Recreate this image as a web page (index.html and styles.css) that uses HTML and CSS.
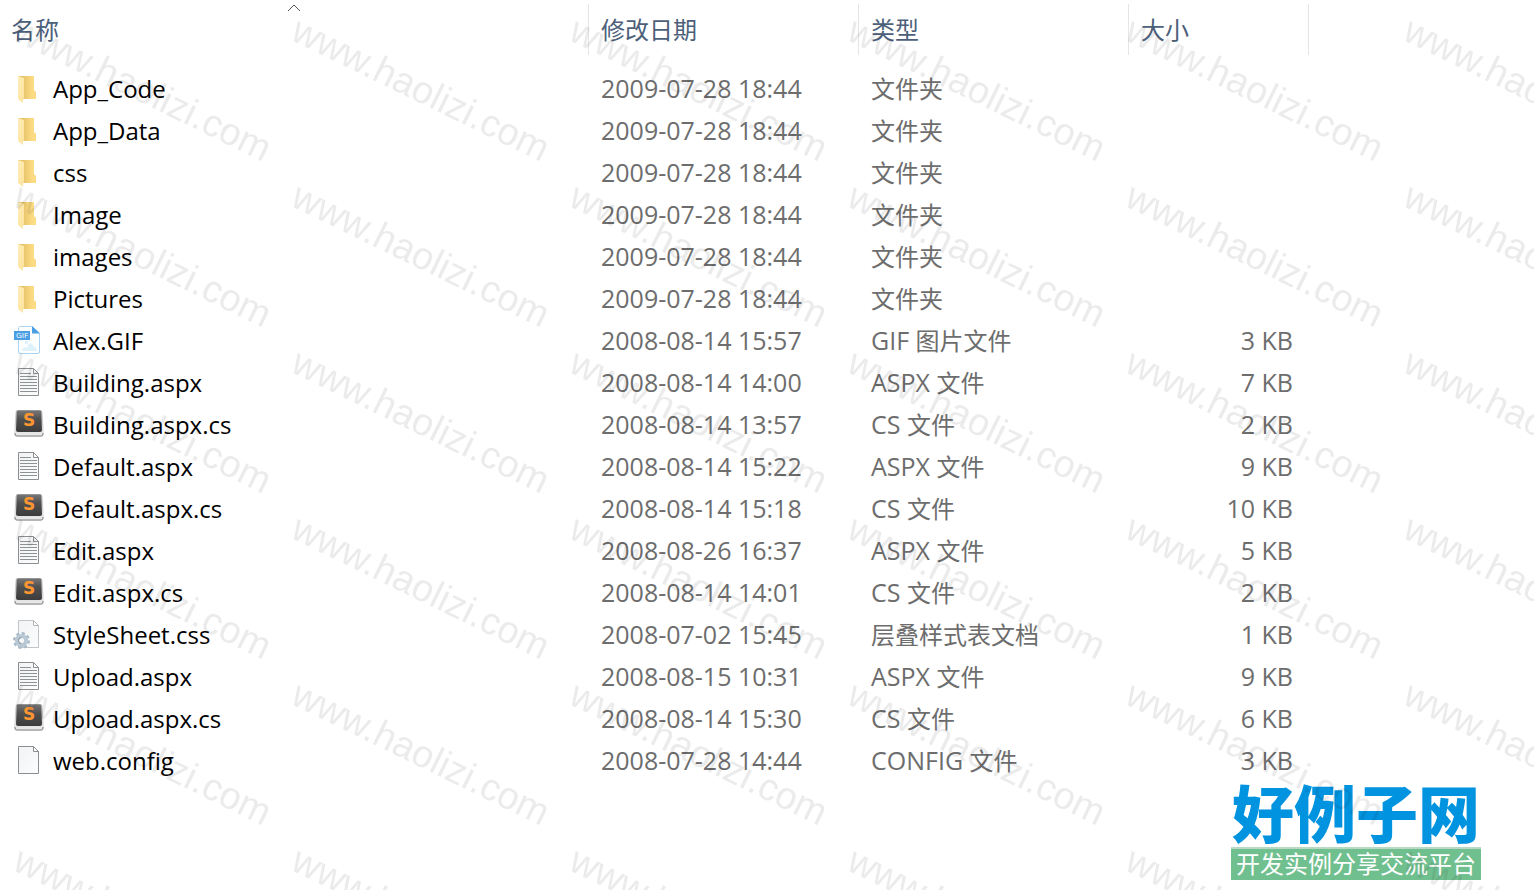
FILE: index.html
```
<!DOCTYPE html>
<html lang="zh-CN">
<head>
    <meta charset="UTF-8">
    <meta name="viewport" content="width=device-width, initial-scale=1.0">
    <title>文件列表</title>
    <link rel="stylesheet" href="styles.css">
</head>
<body>
    <!-- file type icons -->
    <svg class="sprite" aria-hidden="true">
        <defs>
            <linearGradient id="folderFront" x1="0" y1="0" x2="1" y2="0">
                <stop offset="0.3" stop-color="#e8c56c"/>
                <stop offset="0.8" stop-color="#fbdb83"/>
            </linearGradient>
            <linearGradient id="folderFlap" x1="0" y1="0" x2="1" y2="1">
                <stop offset="0" stop-color="#ffedb9"/>
                <stop offset="1" stop-color="#fde29a"/>
            </linearGradient>
            <linearGradient id="paper" x1="0" y1="0" x2="1" y2="1">
                <stop offset="0" stop-color="#f1f3f4"/>
                <stop offset="1" stop-color="#fcfdfd"/>
            </linearGradient>
            <linearGradient id="keyTop" x1="0" y1="0" x2="0" y2="1">
                <stop offset="0" stop-color="#777"/>
                <stop offset="0.4" stop-color="#505050"/>
                <stop offset="1" stop-color="#3c3c3c"/>
            </linearGradient>
            <linearGradient id="keySide" x1="0" y1="0" x2="0" y2="1">
                <stop offset="0" stop-color="#b0b0b0"/>
                <stop offset="1" stop-color="#eee"/>
            </linearGradient>
        </defs>
        <symbol id="folder" viewBox="0 0 32 32">
            <path d="M6 3h16v14l2 2v7H10L6 24z" fill="url(#folderFront)"/>
            <path d="M6 3l6 2v20l-1 1v4l-5-4z" fill="url(#folderFlap)"/>
        </symbol>
        <symbol id="gif" viewBox="0 0 32 32">
            <path d="M7.500 1.500H20L27.500 8v19a1.500 1.500 0 0 1-1.500 1.500H8A1.500 1.500 0 0 1 6.500 27V2.500z" fill="#fcfeff" stroke="#a9d3f1"/>
            <path d="M20 1l8 7.500h-8z" fill="#4a9fe4"/>
            <circle cx="14.500" cy="17.500" r="1.800" fill="#dff2fc"/>
            <path d="M10 26c0-3 3-5 5-3 2-6 5-6 7-1 2 0 3 2 3 4z" fill="#dff2fc"/>
            <path d="M2 6h16v9H2z" fill="#4a9fe4"/>
            <text x="10" y="13" class="gif-label">GIF</text>
        </symbol>
        <symbol id="page" viewBox="0 0 32 32">
            <path d="M6.500 1.500h15l5 5v22h-20z" fill="url(#paper)" stroke="#8b8f91"/>
            <path d="M21.500 1.500v5h5z" fill="#fff" stroke="#8b8f91"/>
        </symbol>
        <symbol id="text" viewBox="0 0 32 32">
            <use href="#page"/>
            <path d="M8 6.500h11M8 9.500h17M8 12.500h17M8 15.500h17M8 18.500h17M8 21.500h17M8 24.500h17" stroke="#8f9294" fill="none"/>
        </symbol>
        <symbol id="sublime" viewBox="0 0 32 32">
            <path d="M6 1h22q2 0 2.300 2L32 25q0 3-3 3H5q-3 0-3-3L3.700 3Q4 1 6 1z" fill="url(#keySide)"/>
            <path d="M3 24v1q0 2 2 2h24q2 0 2-2v-1" fill="none" stroke="#808080"/>
            <path d="M6 1.500h22q1 0 1.200 1.500L30 21q0 2-2 2H6q-2 0-2-2L4.800 3Q5 1.500 6 1.500z" fill="url(#keyTop)"/>
            <text x="17" y="17" class="sublime-label">S</text>
        </symbol>
        <symbol id="config" viewBox="0 0 32 32">
            <path d="M6.500 1.500h15l5 5v22h-20z" fill="url(#paper)" stroke="#c3c6c8"/>
            <path d="M21.500 1.500v5h5z" fill="#fff" stroke="#b3b6b8"/>
            <circle cx="9.500" cy="21.500" r="7" fill="none" stroke="#a9bac9" stroke-width="3" stroke-dasharray="3 2.500"/>
            <circle cx="9.500" cy="21.500" r="4.600" fill="#f6f8f9" stroke="#b9c8d5" stroke-width="4"/>
            <path d="M9.500 18.500a3 3 0 0 0 0 6" fill="none" stroke="#7f909e"/>
        </symbol>
    </svg>

    <main class="explorer">
        <table class="files">
            <colgroup>
                <col>
                <col class="col-date">
                <col class="col-type">
                <col class="col-size">
            </colgroup>
            <thead>
                <tr>
                    <th aria-sort="ascending">
                        <button type="button">名称</button>
                        <svg class="sort" width="14" height="8" viewBox="0 0 14 8" aria-hidden="true"><path d="M1 7l6-6 6 6" fill="none" stroke="#555"/></svg>
                    </th>
                    <th><button type="button">修改日期</button></th>
                    <th><button type="button">类型</button></th>
                    <th><button type="button">大小</button></th>
                </tr>
            </thead>
            <tbody>
                <tr><td><a href="#"><svg class="icon"><use href="#folder"/></svg>App_Code</a></td><td>2009-07-28 18:44</td><td class="type"><span>文件夹</span></td><td></td></tr>
                <tr><td><a href="#"><svg class="icon"><use href="#folder"/></svg>App_Data</a></td><td>2009-07-28 18:44</td><td class="type"><span>文件夹</span></td><td></td></tr>
                <tr><td><a href="#"><svg class="icon"><use href="#folder"/></svg>css</a></td><td>2009-07-28 18:44</td><td class="type"><span>文件夹</span></td><td></td></tr>
                <tr><td><a href="#"><svg class="icon"><use href="#folder"/></svg>Image</a></td><td>2009-07-28 18:44</td><td class="type"><span>文件夹</span></td><td></td></tr>
                <tr><td><a href="#"><svg class="icon"><use href="#folder"/></svg>images</a></td><td>2009-07-28 18:44</td><td class="type"><span>文件夹</span></td><td></td></tr>
                <tr><td><a href="#"><svg class="icon"><use href="#folder"/></svg>Pictures</a></td><td>2009-07-28 18:44</td><td class="type"><span>文件夹</span></td><td></td></tr>
                <tr><td><a href="#"><svg class="icon"><use href="#gif"/></svg>Alex.GIF</a></td><td>2008-08-14 15:57</td><td class="type">GIF <span>图片文件</span></td><td class="size">3 KB</td></tr>
                <tr><td><a href="#"><svg class="icon"><use href="#text"/></svg>Building.aspx</a></td><td>2008-08-14 14:00</td><td class="type">ASPX <span>文件</span></td><td class="size">7 KB</td></tr>
                <tr><td><a href="#"><svg class="icon"><use href="#sublime"/></svg>Building.aspx.cs</a></td><td>2008-08-14 13:57</td><td class="type">CS <span>文件</span></td><td class="size">2 KB</td></tr>
                <tr><td><a href="#"><svg class="icon"><use href="#text"/></svg>Default.aspx</a></td><td>2008-08-14 15:22</td><td class="type">ASPX <span>文件</span></td><td class="size">9 KB</td></tr>
                <tr><td><a href="#"><svg class="icon"><use href="#sublime"/></svg>Default.aspx.cs</a></td><td>2008-08-14 15:18</td><td class="type">CS <span>文件</span></td><td class="size">10 KB</td></tr>
                <tr><td><a href="#"><svg class="icon"><use href="#text"/></svg>Edit.aspx</a></td><td>2008-08-26 16:37</td><td class="type">ASPX <span>文件</span></td><td class="size">5 KB</td></tr>
                <tr><td><a href="#"><svg class="icon"><use href="#sublime"/></svg>Edit.aspx.cs</a></td><td>2008-08-14 14:01</td><td class="type">CS <span>文件</span></td><td class="size">2 KB</td></tr>
                <tr><td><a href="#"><svg class="icon"><use href="#config"/></svg>StyleSheet.css</a></td><td>2008-07-02 15:45</td><td class="type"><span>层叠样式表文档</span></td><td class="size">1 KB</td></tr>
                <tr><td><a href="#"><svg class="icon"><use href="#text"/></svg>Upload.aspx</a></td><td>2008-08-15 10:31</td><td class="type">ASPX <span>文件</span></td><td class="size">9 KB</td></tr>
                <tr><td><a href="#"><svg class="icon"><use href="#sublime"/></svg>Upload.aspx.cs</a></td><td>2008-08-14 15:30</td><td class="type">CS <span>文件</span></td><td class="size">6 KB</td></tr>
                <tr><td><a href="#"><svg class="icon"><use href="#page"/></svg>web.config</a></td><td>2008-07-28 14:44</td><td class="type">CONFIG <span>文件</span></td><td class="size">3 KB</td></tr>
            </tbody>
        </table>

        <div class="brand">
            <div class="brand-name">好例子网</div>
            <div class="brand-slogan">开发实例分享交流平台</div>
        </div>

        <!-- repeating watermark over everything -->
        <svg class="watermark" aria-hidden="true">
            <pattern id="mark" x="6" y="12" width="278" height="166" patternUnits="userSpaceOnUse">
                <text transform="translate(5 27) rotate(26)">www.haolizi.com</text>
            </pattern>
            <rect width="100%" height="100%" fill="url(#mark)"/>
        </svg>
    </main>
</body>
</html>
```
FILE: styles.css
```
body {
    margin: 0;
    background-color: #fff;
    color: #000;
    font-family: "Open Sans", "Noto Sans CJK SC", sans-serif;
    font-size: 25px;
}

.sprite {
    position: absolute;
    width: 0;
    height: 0;
}

.explorer {
    position: relative;
    min-height: 100vh;
    overflow: hidden;
    box-sizing: border-box;
    padding-right: 225px;
}

.files {
    width: 100%;
    table-layout: fixed;
    border-collapse: collapse;
}

.col-date, .col-type {
    width: 270px;
}

.col-size {
    width: 181px;
}

th {
    position: relative;
    padding: 4px 0 13px;
}

th button {
    display: block;
    width: 100%;
    height: 51px;
    padding: 0 12px 2px;
    border: 0;
    border-left: 1px solid #e5e5e5;
    background: none;
    color: #4c607a;
    font-family: "Noto Sans CJK SC", sans-serif;
    font-size: 24px;
    text-align: left;
}

th:first-child button {
    padding-left: 11px;
    border-left: 0;
}

th:last-child button {
    border-right: 1px solid #e5e5e5;
}

.sort {
    position: absolute;
    top: 4px;
    left: 50%;
    margin-left: -7px;
}

td {
    height: 42px;
    padding: 0 0 0 13px;
    line-height: 40px;
    color: #6d6d6d;
    vertical-align: top;
    white-space: nowrap;
}

td:first-child {
    padding-left: 12px;
}

td a {
    display: flex;
    gap: 9px;
    color: #000;
    font-size: 24px;
    line-height: 42px;
    text-decoration: none;
}

.icon {
    width: 32px;
    height: 32px;
    margin-top: 5px;
}

.type span {
    font-size: 24px;
}

.size {
    padding-right: 16px;
    text-align: right;
}

.gif-label {
    fill: #fff;
    font-size: 8px;
    text-anchor: middle;
}

.sublime-label {
    fill: #ff9632;
    font-family: "DejaVu Sans", sans-serif;
    font-size: 17px;
    font-weight: 700;
    text-anchor: middle;
}

.brand {
    position: absolute;
    right: 53px;
    bottom: 10px;
    width: 250px;
    font-family: "Noto Sans CJK SC", sans-serif;
    text-align: center;
    white-space: nowrap;
}

.brand-name {
    padding-bottom: 6px;
    color: #0093e0;
    font-size: 62px;
    font-weight: 900;
    line-height: 60px;
}

.brand-slogan {
    padding-bottom: 4px;
    border-top: 2px solid #b9d8c5;
    background-color: #70c08f;
    color: #fff;
    font-size: 24px;
    line-height: 27px;
}

.watermark {
    position: absolute;
    top: 0;
    left: 0;
    width: 100%;
    height: 100%;
    pointer-events: none;
}

.watermark text {
    fill: #000;
    fill-opacity: 0.08;
    font-family: "Liberation Sans", sans-serif;
    font-size: 38px;
}
```
